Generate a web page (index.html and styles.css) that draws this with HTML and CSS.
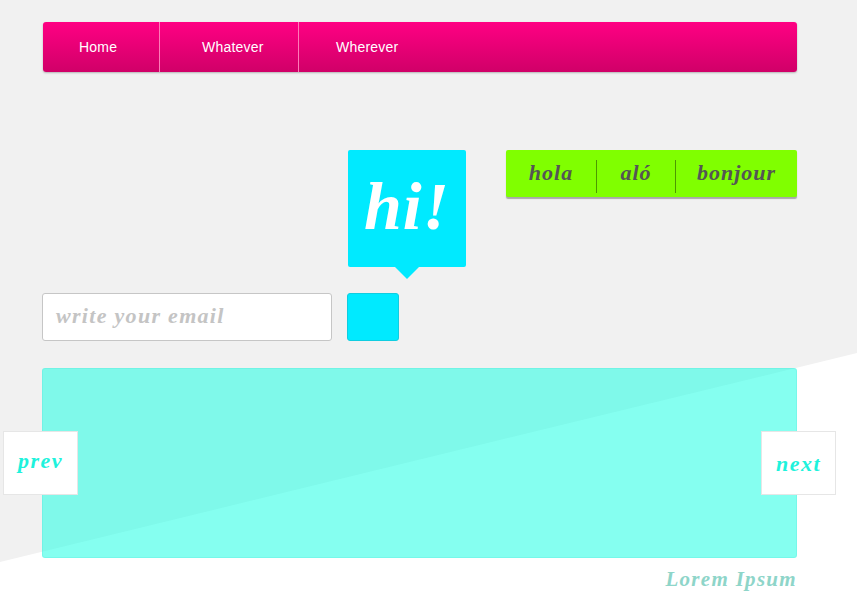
FILE: index.html
```html
<!DOCTYPE html>
<html>
<head>
<meta charset="utf-8">
<link rel="stylesheet" href="styles.css">
</head>
<body>
<div class="page">
  <nav class="nav">
    <a class="nav-item">Home</a>
    <a class="nav-item">Whatever</a>
    <a class="nav-item">Wherever</a>
  </nav>

  <section class="middle">
    <div class="hi">hi!</div>
    <div class="greet">
      <span class="greet-item">hola</span>
      <span class="greet-item">aló</span>
      <span class="greet-item">bonjour</span>
    </div>
    <div class="email">write your email</div>
    <div class="go"></div>
  </section>

  <section class="slider">
    <div class="arrow prev">prev</div>
    <div class="arrow next">next</div>
  </section>

  <footer class="foot">Lorem Ipsum</footer>
</div>
</body>
</html>
```
FILE: styles.css
```css
html, body {
  margin: 0;
  padding: 0;
}
body {
  background: #f1f1f1;
  min-height: 601px;
  position: relative;
  overflow: hidden;
}
body::before {
  content: "";
  position: absolute;
  left: 0;
  top: 0;
  width: 857px;
  height: 601px;
  background: #ffffff;
  clip-path: polygon(857px 353px, 857px 601px, 0 601px, 0 562px);
  z-index: 0;
}
.page {
  position: relative;
  z-index: 1;
  width: 755px;
  margin-left: 42px;
  padding-top: 22px;
}
.nav {
  display: flex;
  height: 50px;
  margin-left: 1px;
  background: linear-gradient(#ff0083, #d00068);
  border-radius: 3px;
  box-shadow: 0 1px 2px rgba(0, 0, 0, 0.25);
}
.nav-item {
  display: flex;
  align-items: center;
  box-sizing: border-box;
  color: #fff;
  font-family: "Liberation Sans", Arial, sans-serif;
  font-size: 14px;
  letter-spacing: 0.2px;
  border-right: 1px solid #ff7ab8;
}
.nav-item:nth-child(1) { width: 117px; padding-left: 36px; }
.nav-item:nth-child(2) { width: 139px; padding-left: 42px; }
.nav-item:nth-child(3) { padding-left: 37px; border-right: none; }

.middle {
  display: grid;
  grid-template-columns: 290px 118px 1fr;
  column-gap: 16px;
  row-gap: 26px;
  margin-top: 78px;
}
.hi {
  grid-column: 2;
  grid-row: 1;
  position: relative;
  height: 117px;
  background: #00eaff;
  border-radius: 2px;
  color: #fff;
  font-family: "Liberation Serif", Georgia, serif;
  font-weight: bold;
  font-style: italic;
  font-size: 68px;
  letter-spacing: 1px;
  display: flex;
  align-items: center;
  justify-content: center;
  padding-bottom: 4px;
  box-sizing: border-box;
}
.hi::after {
  content: "";
  position: absolute;
  left: 50%;
  bottom: -12px;
  margin-left: -12px;
  width: 0;
  height: 0;
  border-left: 12px solid transparent;
  border-right: 12px solid transparent;
  border-top: 12px solid #00eaff;
}
.greet {
  grid-column: 3;
  grid-row: 1;
  align-self: start;
  justify-self: end;
  width: 291px;
  height: 47px;
  box-sizing: border-box;
  background: #80ff00;
  border-radius: 2px;
  box-shadow: 0 2px 1px rgba(0, 0, 0, 0.3);
  display: flex;
  align-items: stretch;
  padding: 13px 0 4px;
}
.greet-item {
  display: flex;
  align-items: center;
  justify-content: center;
  font-family: "Liberation Serif", Georgia, serif;
  font-weight: bold;
  font-style: italic;
  font-size: 22px;
  letter-spacing: 1px;
  color: #555;
  border-right: 1px solid #4c9a00;
  margin-top: -3px;
  padding-bottom: 7px;
}
.greet-item:nth-child(1) { width: 90px; }
.greet-item:nth-child(2) { width: 78px; }
.greet-item:nth-child(3) { flex: 1; border-right: none; }

.email {
  grid-column: 1;
  grid-row: 2;
  height: 48px;
  box-sizing: border-box;
  background: #fff;
  border: 1px solid #c6c6c6;
  border-radius: 3px;
  display: flex;
  align-items: center;
  padding-left: 13px;
  padding-bottom: 3px;
  font-family: "Liberation Serif", Georgia, serif;
  font-weight: bold;
  font-style: italic;
  font-size: 22px;
  letter-spacing: 1.3px;
  color: #c4c4c4;
}
.go {
  grid-column: 2;
  grid-row: 2;
  width: 52px;
  height: 48px;
  margin-left: -1px;
  box-sizing: border-box;
  background: #00eaff;
  border: 1px solid #10cde0;
  border-radius: 3px;
}

.slider {
  position: relative;
  margin-top: 27px;
  height: 190px;
  box-sizing: border-box;
  background: rgba(41, 255, 229, 0.57);
  border: 1px solid rgba(60, 220, 210, 0.2);
  border-radius: 3px;
}
.arrow {
  position: absolute;
  top: 62px;
  width: 75px;
  height: 64px;
  box-sizing: border-box;
  background: #fff;
  border: 1px solid #e6e6e6;
  display: flex;
  align-items: center;
  justify-content: center;
  font-family: "Liberation Serif", Georgia, serif;
  font-weight: bold;
  font-style: italic;
  font-size: 22px;
  letter-spacing: 1.5px;
  color: #1ef2dc;
}
.prev { left: -40px; padding-bottom: 4px; }
.next { right: -40px; padding-top: 2px; }

.foot {
  margin-top: 9px;
  text-align: right;
  font-family: "Liberation Serif", Georgia, serif;
  font-weight: bold;
  font-style: italic;
  font-size: 21px;
  letter-spacing: 1.3px;
  color: #8ed5c9;
}
```
